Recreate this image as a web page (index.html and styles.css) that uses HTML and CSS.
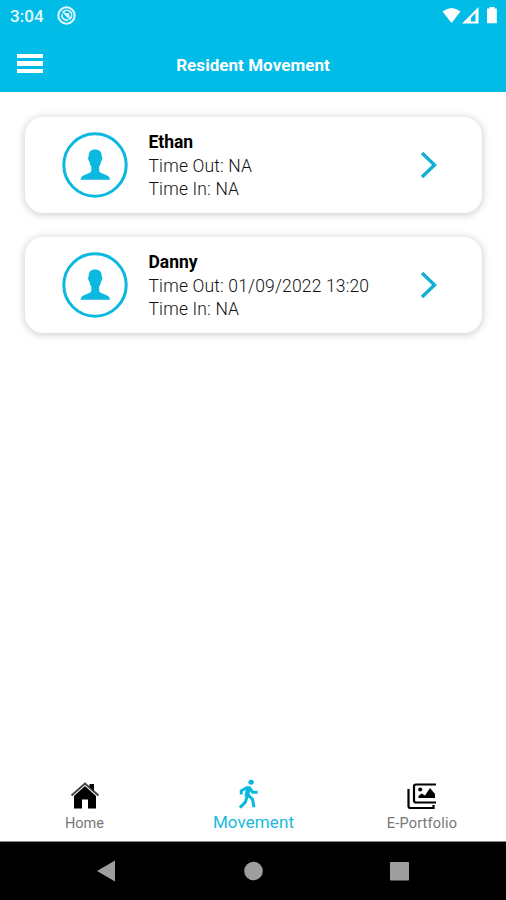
FILE: index.html
```html
<!DOCTYPE html>
<html lang="en">
<head>
<meta charset="utf-8">
<title>Resident Movement</title>
<link rel="stylesheet" href="styles.css">
</head>
<body>
<svg class="symbols" aria-hidden="true">
  <symbol id="person" viewBox="0 0 66 66">
    <circle cx="33" cy="33" r="31.2" fill="none" stroke="currentColor" stroke-width="3"/>
    <path fill="currentColor" d="M33 17.500c4.500 0 7 2.600 6.700 7.200 1 .3.900 3.600-.5 4.500-.4 2.300-1.300 3.900-2 5.200v5c2.500 3.200 10.500 2.600 11 8.400H18.500c.5-5.800 8.200-5.200 10.800-8.400v-5c-.8-1.300-1.600-2.900-2-5.200-1.400-.9-1.500-4.200-.6-4.500-.3-4.600 2.100-7.200 6.300-7.200z"/>
  </symbol>
  <symbol id="chevron" viewBox="0 0 18 28">
    <path fill="none" stroke="currentColor" stroke-width="3.400" d="M2 2l12.500 12L2 26"/>
  </symbol>
</svg>
<header class="header">
  <div class="status">
    <span class="clock">3:04</span>
    <svg class="notice" width="19" height="19" viewBox="0 0 19 19"><g fill="none" stroke="#e3f9ff"><circle cx="9.500" cy="9.500" r="8.200" stroke-width="2"/><path stroke-width="1.700" d="M5.200 8.200a4.700 4.700 0 0 0 6.200 5.600M6.500 5.700a4.700 4.700 0 0 1 6.800 6.600M5.500 5.500l8 8M8.200 8l3-.2 .5 3.200"/></g></svg>
    <svg class="signals" width="56" height="18" viewBox="0 0 56 18"><g fill="#fff"><path d="M.5 4.500Q9.500-2.500 18.500 4.500L9.500 16z"/><path fill-rule="evenodd" d="M20 16.500L36.500 0v16.500zM29 10.500v4h4.500V6z"/><path d="M47.500 0h5v1.500h2.300v14.800h-9.800V1.500h2.500z"/></g></svg>
  </div>
  <div class="toolbar">
    <div class="menu"><i></i><i></i><i></i></div>
    <h1>Resident Movement</h1>
  </div>
</header>
<main>
  <article class="card">
    <svg class="avatar"><use href="#person"/></svg>
    <div class="details"><h2>Ethan</h2><p>Time Out: NA</p><p>Time In: NA</p></div>
    <svg class="chevron"><use href="#chevron"/></svg>
  </article>
  <article class="card">
    <svg class="avatar"><use href="#person"/></svg>
    <div class="details"><h2>Danny</h2><p>Time Out: 01/09/2022 13:20</p><p>Time In: NA</p></div>
    <svg class="chevron"><use href="#chevron"/></svg>
  </article>
</main>
<nav class="tabs">
  <div class="tab">
    <svg width="30" height="30" viewBox="0 0 30 30"><path d="M4 14L15 4.500 26 14v13.500h-8v-9h-6v9H4z"/><path d="M1 14.500L15 2l14 12.500" fill="none" stroke="#fff" stroke-width="4.500"/><path d="M1.500 14.500L15 2.500l13.500 12" fill="none" stroke="#444" stroke-width="2"/><path d="M19.500 3h4.500v7l-4.500-4z"/></svg>
    <span>Home</span>
  </div>
  <div class="tab active">
    <svg width="30" height="30" viewBox="0 2 30 33"><g fill="none" stroke="#09b9df" stroke-width="3.300"><path d="M6.500 19v-4l6-3.500h3l3.500 5h5.500M13 21l-2 6.500-6 6M14 19.500l5 5 1.500 8.500"/><path stroke-width="5" d="M14.500 11l-2 10.500"/></g><ellipse cx="17.300" cy="5.500" rx="3" ry="2.700" fill="#09b9df"/></svg>
    <span>Movement</span>
  </div>
  <div class="tab">
    <svg width="30" height="30" viewBox="0 0 30 30"><path fill="none" stroke="#000" stroke-width="2.200" d="M29 3.500H9Q7 3.500 7 5.500v14q0 2 2 2h20M1.500 8v17q0 2 2 2H26.500v-3"/><circle cx="13.200" cy="8.500" r="2"/><path d="M11.500 17v-2l3-2.500 3.500 2 5-7.500 5 6v4z"/></svg>
    <span class="wide">E-Portfolio</span>
  </div>
</nav>
<footer class="system-nav">
  <svg width="506" height="58" viewBox="0 0 506 58"><g fill="#9e9e9e"><path d="M97 29l18-10.500v21z"/><circle cx="253.500" cy="29" r="9.300"/><rect x="390" y="20" width="19" height="18.500" rx="1"/></g></svg>
</footer>
</body>
</html>
```
FILE: styles.css
```css
* { box-sizing: border-box; }
body {
  margin: 0;
  height: 900px;
  display: flex;
  flex-direction: column;
  overflow: hidden;
  background: #fff;
  color: #000;
  font-family: Roboto, "Liberation Sans", sans-serif;
}
h1, h2, p { margin: 0; }
svg { display: block; flex-shrink: 0; }
.symbols { position: absolute; width: 0; height: 0; }
.header { height: 92px; background: #00bce6; color: #fff; }
.status { height: 32px; display: flex; align-items: center; padding: 0 8px 0 10px; }
.clock { width: 47px; font-size: 17px; font-weight: 500; letter-spacing: .1px; color: #e3f9ff; }
.notice { margin-top: -1px; }
.signals { margin-left: auto; margin-top: -1px; }
.toolbar { height: 60px; display: grid; grid-template-columns: 50px 1fr 50px; align-items: center; padding-top: 4px; }
.menu { width: 26px; margin: -1px 0 0 17px; display: grid; gap: 3px; }
.menu i { height: 4.500px; background: #fff; }
h1 { text-align: center; font-size: 17px; line-height: 22px; font-weight: 700; letter-spacing: .05px; padding-top: 1px; }
main { flex: 1; display: flex; flex-direction: column; gap: 24px; padding: 25px 24px 0 25px; }
.card {
  height: 95.500px;
  display: flex;
  align-items: center;
  padding: 0 44px 0 37px;
  border-radius: 18px;
  background: #fff;
  box-shadow: 0 1px 8px rgba(0,0,0,.23);
}
.card + .card { margin-top: .5px; }
.avatar { width: 66px; height: 66px; color: #0bb8df; }
.details { margin: 3px 0 0 20.500px; flex: 1; font-size: 17.500px; line-height: 23.500px; letter-spacing: .16px; white-space: nowrap; }
h2 { font-size: 17.500px; line-height: 23.500px; font-weight: 700; letter-spacing: -.05px; }
p { font-weight: 300; color: #111; }
.chevron { width: 18px; height: 28px; color: #10afd3; }
.tabs { height: 68px; display: grid; grid-template-columns: 169px 169px 168px; padding-top: 8px; }
.tab { display: flex; flex-direction: column; align-items: center; font-size: 14.500px; line-height: 20px; color: #777; }
.tab span { margin-top: 3px; }
.wide { letter-spacing: .2px; }
.active { color: #19b9dd; font-size: 17px; letter-spacing: .08px; }
.active svg { margin-top: -2px; margin-right: 10px; }
.system-nav { height: 59px; background: #000; border-top: 1px solid #888; }
```
